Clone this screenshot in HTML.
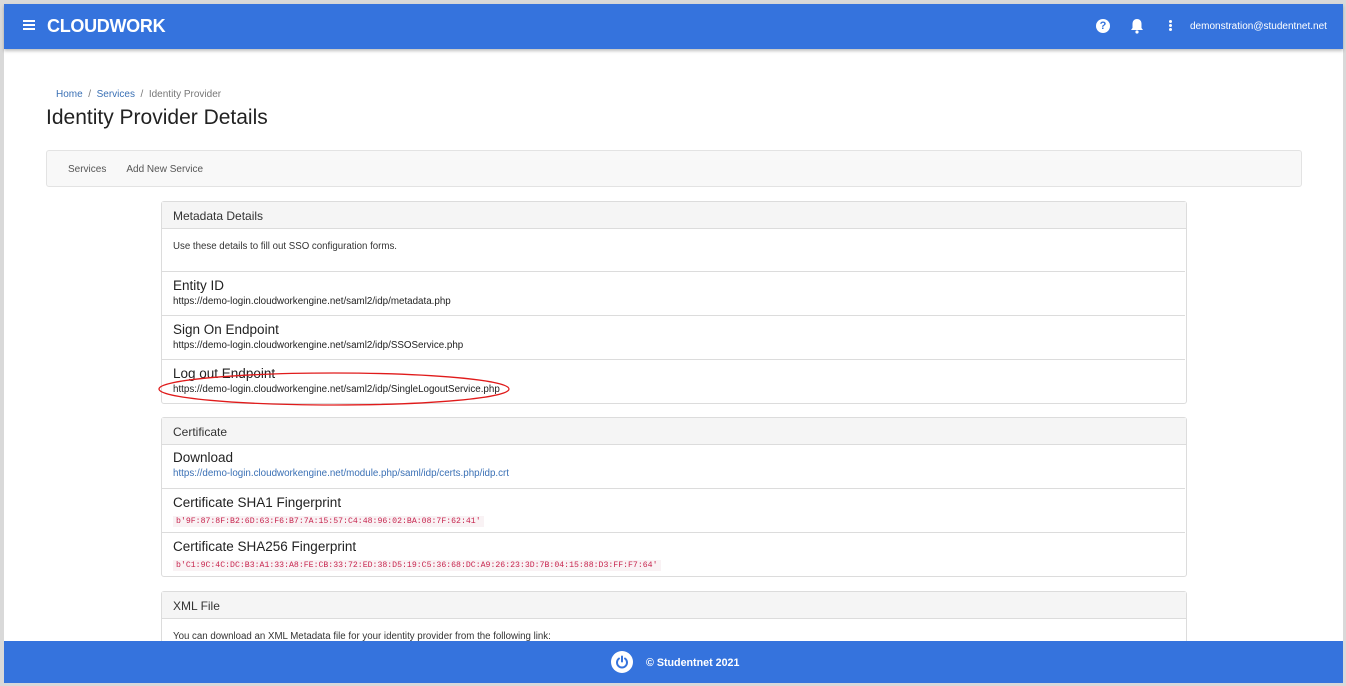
<!DOCTYPE html>
<html><head><meta charset="utf-8"><style>
*{margin:0;padding:0;box-sizing:border-box}
body{width:1346px;height:686px;background:#d9d9d9;font-family:"Liberation Sans",sans-serif;position:relative;overflow:hidden}
.a{position:absolute}
.page{left:4px;top:4px;width:1339px;height:679px;background:#fff}
.hdr{left:4px;top:4px;width:1339px;height:45px;background:#3573dd;box-shadow:0 2px 3px rgba(0,0,0,.25)}
.ftr{left:4px;top:641px;width:1339px;height:42px;background:#3573dd}
.card{border:1px solid #dcdcdc;border-radius:3px;left:161px;width:1026px;background:#fff}
.ch{background:#f5f5f5;border-bottom:1px solid #dcdcdc;height:27px;font-size:12px;color:#333;padding:7px 11px}
.row{position:absolute;left:0;width:1023px;border-top:1px solid #dcdcdc;padding-left:11px}
.t{font-size:13.5px;color:#222;margin-top:6px}
.s{font-size:9.8px;color:#222;margin-top:3px}
code{font-family:"Liberation Mono",monospace;font-size:8.2px;color:#c7254e;background:#f9f2f4;padding:1px 3px;display:inline-block;margin-top:4px}
</style></head><body>
<div class="a page"></div>
<div class="a hdr">
 <div class="a" style="left:19px;top:16px;width:12px;height:2px;background:#fff;box-shadow:0 4px 0 #fff,0 8px 0 #fff"></div>
 <div class="a" style="left:43px;top:12px;color:#fff;font-weight:bold;font-size:18px;letter-spacing:-.3px">CLOUDWORK</div>
 <div class="a" style="left:1092px;top:15px;width:14px;height:14px;border-radius:50%;background:#fff;color:#3573dd;font-size:11px;font-weight:bold;text-align:center;line-height:14px">?</div>
 <svg class="a" style="left:1126px;top:14px" width="14" height="16" viewBox="0 0 14 16"><path d="M7 1c-3 0-4.5 2.2-4.5 5v4L1 12h12l-1.5-2V6C11.5 3.2 10 1 7 1z" fill="#fff"/><circle cx="7" cy="14" r="1.6" fill="#fff"/></svg>
 <div class="a" style="left:1165px;top:16px;width:3px;height:3px;border-radius:50%;background:#fff;box-shadow:0 4px 0 #fff,0 8px 0 #fff"></div>
 <div class="a" style="left:1186px;top:17px;color:#fff;font-size:10px">demonstration@studentnet.net</div>
</div>
<div class="a" style="left:56px;top:89px;font-size:10px;color:#777"><span style="color:#3a70b5">Home</span> &nbsp;/&nbsp; <span style="color:#3a70b5">Services</span> &nbsp;/&nbsp; Identity Provider</div>
<div class="a" style="left:46px;top:106px;font-size:21px;color:#222">Identity Provider Details</div>
<div class="a" style="left:46px;top:150px;width:1256px;height:37px;background:#f8f8f8;border:1px solid #e3e3e3;border-radius:3px;font-size:10px;color:#555;padding:13px 0 0 21px">Services<span style="margin-left:20px">Add New Service</span></div>

<div class="a card" style="top:201px;height:203px">
 <div class="ch">Metadata Details</div>
 <div style="font-size:9.7px;color:#333;padding:12px 11px">Use these details to fill out SSO configuration forms.</div>
 <div class="row" style="top:69px"><div class="t">Entity ID</div><div class="s">https://demo-login.cloudworkengine.net/saml2/idp/metadata.php</div></div>
 <div class="row" style="top:113px"><div class="t">Sign On Endpoint</div><div class="s">https://demo-login.cloudworkengine.net/saml2/idp/SSOService.php</div></div>
 <div class="row" style="top:157px"><div class="t">Log out Endpoint</div><div class="s">https://demo-login.cloudworkengine.net/saml2/idp/SingleLogoutService.php</div></div>
</div>
<svg class="a" style="left:158px;top:370px" width="356" height="40"><ellipse cx="176" cy="19" rx="175" ry="16" fill="none" stroke="#e01b1b" stroke-width="1.3"/></svg>

<div class="a card" style="top:417px;height:160px">
 <div class="ch">Certificate</div>
 <div class="row" style="top:26px;border-top:0"><div class="t">Download</div><div class="s" style="color:#3a70b5">https://demo-login.cloudworkengine.net/module.php/saml/idp/certs.php/idp.crt</div></div>
 <div class="row" style="top:70px"><div class="t">Certificate SHA1 Fingerprint</div><code>b'9F:87:8F:B2:6D:63:F6:B7:7A:15:57:C4:48:96:02:BA:08:7F:62:41'</code></div>
 <div class="row" style="top:114px"><div class="t">Certificate SHA256 Fingerprint</div><code>b'C1:9C:4C:DC:B3:A1:33:A8:FE:CB:33:72:ED:38:D5:19:C5:36:68:DC:A9:26:23:3D:7B:04:15:88:D3:FF:F7:64'</code></div>
</div>

<div class="a card" style="top:591px;height:80px">
 <div class="ch">XML File</div>
 <div style="font-size:9.7px;color:#333;padding:12px 11px">You can download an XML Metadata file for your identity provider from the following link:</div>
</div>

<div class="a ftr">
 <div class="a" style="left:607px;top:10px;width:22px;height:22px;border-radius:50%;background:#fff"></div>
 <svg class="a" style="left:611px;top:14px" width="14" height="14" viewBox="0 0 14 14"><path d="M4 3.5A5 5 0 1 0 10 3.5" fill="none" stroke="#3573dd" stroke-width="2" stroke-linecap="round"/><path d="M7 1.5v5" stroke="#3573dd" stroke-width="2" stroke-linecap="round"/></svg>
 <div class="a" style="left:642px;top:16px;color:#fff;font-size:10.7px;font-weight:bold">© Studentnet 2021</div>
</div>
</body></html>
